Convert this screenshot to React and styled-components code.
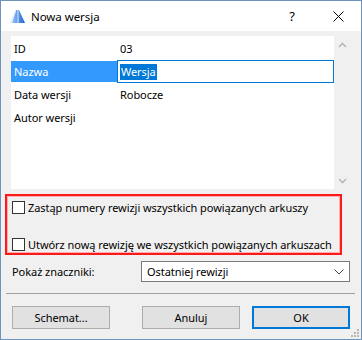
import React from "react";
import styled, { createGlobalStyle } from "styled-components";

const Global = createGlobalStyle`
  html, body {
    margin: 0;
    padding: 0;
    background: #ffffff;
  }
  * {
    box-sizing: border-box;
  }
  body {
    font-family: "Noto Sans", "Open Sans", "DejaVu Sans", sans-serif;
    font-size: 11px;
    letter-spacing: -0.05px;
    color: #000;
  }
`;

const Window = styled.div`
  width: 362px;
  height: 340px;
  border: 1px solid #7093bb;
  background: #f0f0f0;
  display: flex;
  flex-direction: column;
  position: relative;
  overflow: hidden;
`;

const TitleBar = styled.div`
  height: 30px;
  background: #ffffff;
  display: flex;
  align-items: center;
  padding-left: 9px;
  flex-shrink: 0;
`;

const Title = styled.span`
  margin-left: 6px;
  font-size: 11.5px;
  flex: 1;
`;

const TitleButton = styled.span`
  width: 46px;
  height: 30px;
  display: flex;
  align-items: center;
  justify-content: center;
  font-size: 13px;
`;

const Client = styled.div`
  flex: 1;
  padding: 5px 4px 0 4px;
  display: flex;
  flex-direction: column;
`;

const ListBox = styled.div`
  margin-left: 6px;
  width: 339px;
  height: 153px;
  display: flex;
  flex-shrink: 0;
`;

const ListBody = styled.div`
  width: 323px;
  background: #ffffff;
  padding-top: 1px;
`;

const ScrollBar = styled.div`
  flex: 1;
  display: flex;
  flex-direction: column;
  justify-content: space-between;
  align-items: center;
  padding: 6px 0 5px 0;
`;

const Row = styled.div`
  height: 23px;
  display: flex;
  align-items: center;
`;

const Label = styled.div`
  width: 106px;
  height: 21px;
  padding-left: 3px;
  display: flex;
  align-items: center;
  background: ${(p) => (p.$selected ? "#3399ff" : "transparent")};
  color: ${(p) => (p.$selected ? "#ffffff" : "#000000")};
`;

const Value = styled.div`
  flex: 1;
  padding-left: 3px;
`;

const EditBox = styled.div`
  flex: 1;
  height: 23px;
  border: 1px solid #0078d7;
  display: flex;
  align-items: center;
  padding-left: 2px;
`;

const Selected = styled.span`
  background: #0078d7;
  color: #ffffff;
  padding: 0 1px;
  line-height: 16px;
`;

const Group = styled.div`
  margin-top: 5px;
  width: 337px;
  height: 61px;
  border: 2px solid #ff1a1a;
  box-shadow: inset 0 0 0 1px #ffb0b0;
  display: flex;
  flex-direction: column;
  padding: 5px 0 0 5px;
  gap: 24px;
  flex-shrink: 0;
`;

const CheckRow = styled.label`
  display: flex;
  align-items: center;
  height: 13px;
  gap: 3px;
  white-space: nowrap;
`;

const Box = styled.span`
  width: 13px;
  height: 13px;
  border: 1px solid #333333;
  background: #ffffff;
  flex-shrink: 0;
`;

const ShowRow = styled.div`
  margin-top: 6px;
  display: flex;
  align-items: center;
  padding-left: 7px;
  height: 21px;
  flex-shrink: 0;
`;

const ShowLabel = styled.span`
  width: 129px;
`;

const Select = styled.div`
  width: 209px;
  height: 21px;
  border: 1px solid #7a7a7a;
  background: #ffffff;
  display: flex;
  align-items: center;
  justify-content: space-between;
  padding: 0 5px 0 5px;
`;

const Separator = styled.div`
  margin: 11px 1px 0 1px;
  height: 1px;
  width: 349px;
  background: #a0a0a0;
  flex-shrink: 0;
`;

const Buttons = styled.div`
  margin-top: 12px;
  padding-left: 7px;
  display: flex;
  gap: 32px;
  flex-shrink: 0;
`;

const Button = styled.div`
  width: 98px;
  height: 23px;
  background: #e1e1e1;
  border: ${(p) => (p.$default ? "2px solid #0078d7" : "1px solid #adadad")};
  display: flex;
  align-items: center;
  justify-content: center;
  margin-left: ${(p) => p.$shift || 0}px;
`;

const Grip = styled.svg`
  position: absolute;
  right: 2px;
  bottom: 2px;
`;

function AppIcon() {
  return (
    <svg width="15" height="15" viewBox="0 0 15 15">
      <defs>
        <linearGradient id="ic" x1="0" x2="1" y1="0" y2="0">
          <stop offset="0" stopColor="#a9d2ff" />
          <stop offset="1" stopColor="#1a62d6" />
        </linearGradient>
      </defs>
      <polygon points="0,14 6,1 9,1 15,14" fill="url(#ic)" />
      <polygon points="0,14 5,2 6,2 2,14" fill="#e8f3ff" />
      <line x1="8" y1="1" x2="8" y2="14" stroke="#ffffff" strokeWidth="0.8" />
    </svg>
  );
}

function Chevron({ up }) {
  return (
    <svg width="9" height="6" viewBox="0 0 9 6">
      <polyline
        points={up ? "1,5 4.5,1.5 8,5" : "1,1 4.5,4.5 8,1"}
        fill="none"
        stroke="#b8b8b8"
        strokeWidth="1.6"
      />
    </svg>
  );
}

export default function App() {
  return (
    <>
      <Global />
      <Window>
        <TitleBar>
          <AppIcon />
          <Title>Nowa wersja</Title>
          <TitleButton>?</TitleButton>
          <TitleButton>
            <svg width="11" height="11" viewBox="0 0 11 11">
              <path d="M0.5 0.5 L10.5 10.5 M10.5 0.5 L0.5 10.5" stroke="#000" strokeWidth="1" />
            </svg>
          </TitleButton>
        </TitleBar>
        <Client>
          <ListBox>
            <ListBody>
              <Row>
                <Label>ID</Label>
                <Value>03</Value>
              </Row>
              <Row>
                <Label $selected>Nazwa</Label>
                <EditBox>
                  <Selected>Wersja</Selected>
                </EditBox>
              </Row>
              <Row>
                <Label>Data wersji</Label>
                <Value>Robocze</Value>
              </Row>
              <Row>
                <Label>Autor wersji</Label>
                <Value />
              </Row>
            </ListBody>
            <ScrollBar>
              <Chevron up />
              <Chevron />
            </ScrollBar>
          </ListBox>
          <Group>
            <CheckRow>
              <Box />
              Zastąp numery rewizji wszystkich powiązanych arkuszy
            </CheckRow>
            <CheckRow>
              <Box />
              Utwórz nową rewizję we wszystkich powiązanych arkuszach
            </CheckRow>
          </Group>
          <ShowRow>
            <ShowLabel>Pokaż znaczniki:</ShowLabel>
            <Select>
              <span>Ostatniej rewizji</span>
              <svg width="10" height="6" viewBox="0 0 10 6">
                <polyline points="0.5,0.5 5,5 9.5,0.5" fill="none" stroke="#444" strokeWidth="1" />
              </svg>
            </Select>
          </ShowRow>
          <Separator />
          <Buttons>
            <Button>Schemat...</Button>
            <Button>Anuluj</Button>
            <Button $default $shift={-20}>OK</Button>
          </Buttons>
        </Client>
        <Grip width="9" height="9" viewBox="0 0 9 9">
          {[
            [7, 1],
            [7, 4],
            [7, 7],
            [4, 4],
            [4, 7],
            [1, 7],
          ].map(([x, y]) => (
            <rect key={`${x}-${y}`} x={x} y={y} width="2" height="2" fill="#b8b8b8" />
          ))}
        </Grip>
      </Window>
    </>
  );
}
